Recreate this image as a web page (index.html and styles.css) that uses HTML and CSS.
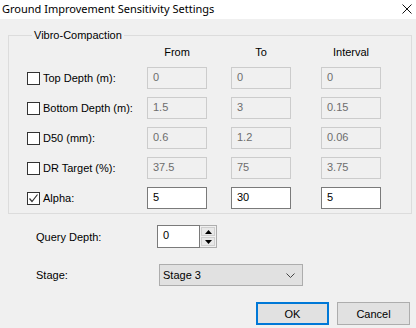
FILE: index.html
```html
<!DOCTYPE html>
<html lang="en">
<head>
    <meta charset="UTF-8">
    <title>Ground Improvement Sensitivity Settings</title>
    <link rel="stylesheet" href="styles.css">
</head>
<body>
    <div class="window">
        <div class="titlebar">
            <span class="title">Ground Improvement Sensitivity Settings</span>
            <svg class="close" width="10" height="10" viewBox="0 0 10 10">
                <path d="M0.5 0.5 L9.5 9.5 M9.5 0.5 L0.5 9.5" stroke="#111" stroke-width="1" fill="none"/>
            </svg>
        </div>

        <div class="content">
            <fieldset class="group">
                <legend>Vibro-Compaction</legend>
                <div class="grid">
                    <div></div>
                    <div class="col-head">From</div>
                    <div class="col-head">To</div>
                    <div class="col-head">Interval</div>

                    <label class="check"><span class="box"></span>Top Depth (m):</label>
                    <div class="field disabled">0</div>
                    <div class="field disabled">0</div>
                    <div class="field disabled">0</div>

                    <label class="check"><span class="box"></span>Bottom Depth (m):</label>
                    <div class="field disabled">1.5</div>
                    <div class="field disabled">3</div>
                    <div class="field disabled">0.15</div>

                    <label class="check"><span class="box"></span>D50 (mm):</label>
                    <div class="field disabled">0.6</div>
                    <div class="field disabled">1.2</div>
                    <div class="field disabled">0.06</div>

                    <label class="check"><span class="box"></span>DR Target (%):</label>
                    <div class="field disabled">37.5</div>
                    <div class="field disabled">75</div>
                    <div class="field disabled">3.75</div>

                    <label class="check"><span class="box">
                        <svg width="11" height="11" viewBox="0 0 11 11">
                            <path d="M1.5 5.5 L4 8.5 L9.5 1.5" stroke="#333" stroke-width="1.2" fill="none"/>
                        </svg>
                    </span>Alpha:</label>
                    <div class="field">5</div>
                    <div class="field">30</div>
                    <div class="field">5</div>
                </div>
            </fieldset>

            <div class="option-row">
                <span class="option-label">Query Depth:</span>
                <div class="spin">
                    <div class="spin-text">0</div>
                    <div class="spin-buttons">
                        <div class="spin-btn">
                            <svg width="7" height="4" viewBox="0 0 7 4"><path d="M3.5 0 L7 4 L0 4 Z" fill="#000"/></svg>
                        </div>
                        <div class="spin-btn">
                            <svg width="7" height="4" viewBox="0 0 7 4"><path d="M0 0 L7 0 L3.5 4 Z" fill="#000"/></svg>
                        </div>
                    </div>
                </div>
            </div>

            <div class="option-row stage-row">
                <span class="option-label">Stage:</span>
                <div class="dropdown">
                    <span>Stage 3</span>
                    <svg width="9" height="5" viewBox="0 0 9 5">
                        <path d="M0.5 0.5 L4.5 4.5 L8.5 0.5" stroke="#444" stroke-width="1" fill="none"/>
                    </svg>
                </div>
            </div>

            <div class="buttons">
                <button class="btn default">OK</button>
                <button class="btn">Cancel</button>
            </div>
        </div>
    </div>
</body>
</html>
```

FILE: styles.css
```css
body {
    margin: 0;
    padding: 0;
    font-family: "Liberation Sans", Arial, sans-serif;
    font-size: 11px;
    color: #000;
}
.window {
    width: 416px;
    height: 328px;
    background-color: #f0f0f0;
    overflow: hidden;
}
.titlebar {
    height: 19px;
    background-color: #fff;
    display: flex;
    align-items: center;
    justify-content: space-between;
    padding: 0 4px 0 2px;
}
.title {
    font-family: "Noto Sans", sans-serif;
    font-size: 11px;
    line-height: 14px;
    margin-top: -2px;
}
.close {
    margin-top: -2px;
}
.group {
    margin: 9px 4px 0 8px;
    padding: 3px 4px 4px 18px;
    border: 1px solid #dcdcdc;
    min-width: 0;
}
.group legend {
    margin-left: 5px;
    padding: 0 2px;
    line-height: 14px;
}
.grid {
    display: grid;
    grid-template-columns: 120px 84px 90px 60px;
    row-gap: 8px;
    align-items: center;
    justify-items: start;
}
.col-head {
    width: 60px;
    text-align: center;
    line-height: 14px;
}
.check {
    display: flex;
    align-items: center;
    gap: 3px;
    white-space: nowrap;
}
.box {
    width: 13px;
    height: 13px;
    box-sizing: border-box;
    border: 1px solid #333;
    background-color: #fff;
    display: flex;
    align-items: center;
    justify-content: center;
}
.field {
    width: 60px;
    height: 22px;
    box-sizing: border-box;
    border: 1px solid #7a7a7a;
    background-color: #fff;
    padding: 0 5px;
    line-height: 19px;
}
.field.disabled {
    border-color: #cccccc;
    background-color: #f0f0f0;
    color: #6d6d6d;
}
.option-row {
    display: flex;
    align-items: center;
    margin: 11px 0 0 36px;
}
.option-label {
    width: 121px;
}
.spin {
    display: flex;
    height: 23px;
    box-sizing: border-box;
    border: 1px solid #adadad;
    background-color: #f0f0f0;
}
.spin-text {
    width: 43px;
    box-sizing: border-box;
    border: 1px solid #7a7a7a;
    margin: -1px 0 -1px -1px;
    background-color: #fff;
    padding: 0 5px;
    line-height: 19px;
}
.spin-buttons {
    display: flex;
    flex-direction: column;
    padding: 1px;
    gap: 1px;
}
.spin-btn {
    width: 14px;
    flex: 1;
    box-sizing: border-box;
    border: 1px solid #cfcfcf;
    background-color: #e8e8e8;
    display: flex;
    align-items: center;
    justify-content: center;
}
.stage-row {
    margin-top: 16px;
}
.dropdown {
    margin-left: 2px;
    width: 144px;
    height: 22px;
    box-sizing: border-box;
    border: 1px solid #adadad;
    background-color: #e1e1e1;
    display: flex;
    align-items: center;
    justify-content: space-between;
    padding: 0 7px 0 3px;
}
.buttons {
    display: flex;
    justify-content: flex-end;
    gap: 8px;
    margin: 16px 6px 0 0;
}
.btn {
    width: 73px;
    height: 23px;
    box-sizing: border-box;
    border: 1px solid #adadad;
    background-color: #e1e1e1;
    font-family: "Liberation Sans", Arial, sans-serif;
    font-size: 11px;
    color: #000;
    padding: 0;
}
.btn.default {
    border: 2px solid #0078d7;
}
```
